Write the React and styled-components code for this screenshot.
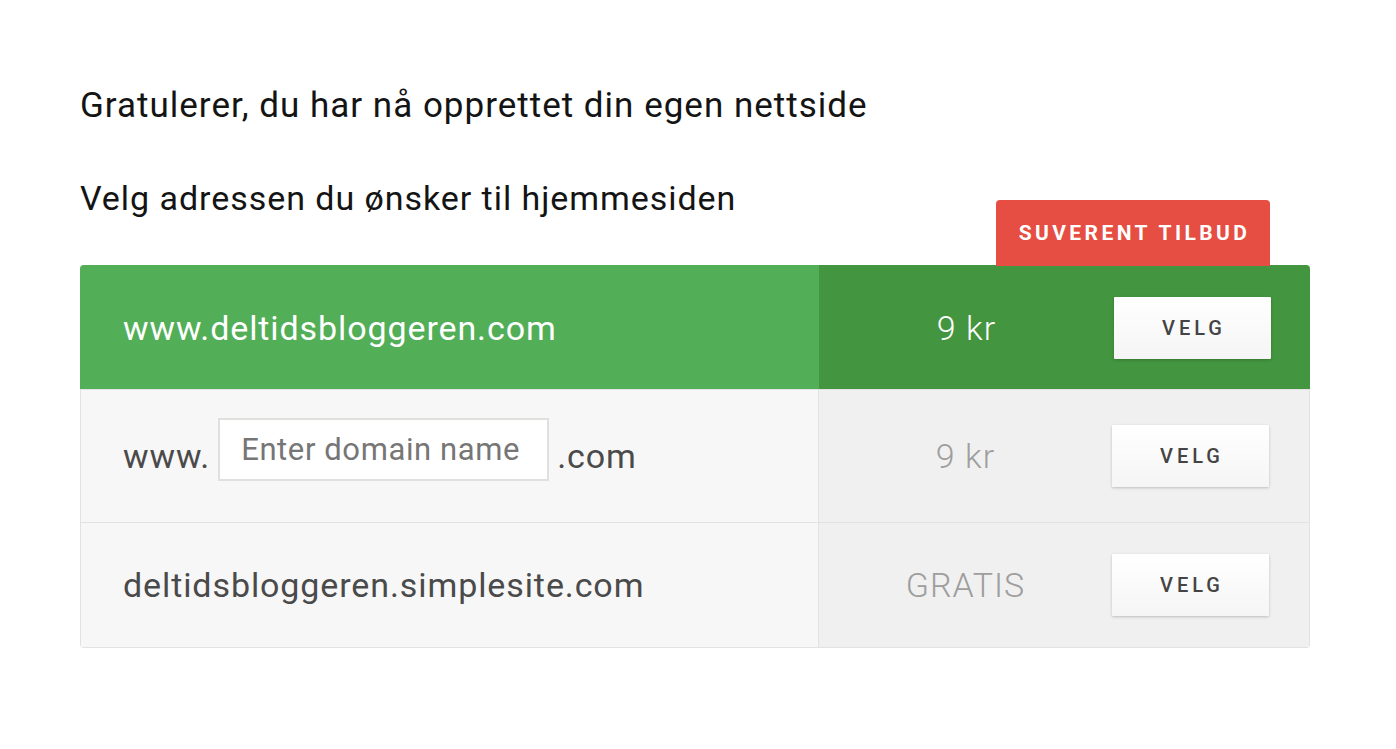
import React from 'react';
import styled, { createGlobalStyle } from 'styled-components';

const GlobalStyle = createGlobalStyle`
    body {
        margin: 0;
        background: #fff;
        font-family: Roboto, "Liberation Sans", sans-serif;
    }
`;

const Page = styled.div`
    padding: 86px 86px 0 80px;
`;

const Title = styled.h1`
    margin: 0;
    font-size: 35px;
    font-weight: 400;
    line-height: 40px;
    letter-spacing: 1px;
    color: #141414;
`;

const SubTitle = styled(Title)`
    margin-top: 52px;
    font-size: 34px;
    letter-spacing: 0.95px;
`;

const Table = styled.div`
    position: relative;
    box-sizing: border-box;
    margin-top: 47px;
    width: 1230px;
    display: grid;
    grid-template-columns: 738px 1fr;
    border: 1px solid #e2e2e2;
    border-top: none;
    border-radius: 4px;
`;

const Badge = styled.div`
    position: absolute;
    right: 39px;
    bottom: 100%;
    width: 274px;
    height: 66px;
    margin-bottom: -1px;
    padding-left: 3px;
    box-sizing: border-box;
    display: flex;
    align-items: center;
    justify-content: center;
    background: #e64d43;
    color: #fff;
    border-radius: 4px 4px 0 0;
    font-size: 21px;
    font-weight: 700;
    letter-spacing: 3.4px;
`;

const NameCell = styled.div`
    height: ${p => p.h}px;
    display: flex;
    align-items: center;
    padding-left: 42px;
    font-size: 34px;
    letter-spacing: 0.9px;
    color: ${p => (p.featured ? '#fff' : '#4a4a4a')};
    background: ${p => (p.featured ? '#52ae57' : '#f7f7f7')};
    border-right: 1px solid ${p => (p.featured ? '#52ae57' : '#e2e2e2')};
    border-top: 1px solid ${p => (p.featured ? '#52ae57' : '#e2e2e2')};
    ${p => p.featured && 'border-top-left-radius: 4px; margin-left: -1px; padding-left: 43px;'}
`;

const PriceCell = styled.div`
    height: ${p => p.h}px;
    display: flex;
    align-items: center;
    background: ${p => (p.featured ? '#43953f' : '#f0f0f0')};
    border-top: 1px solid ${p => (p.featured ? '#43953f' : '#e2e2e2')};
    ${p => p.featured && 'border-top-right-radius: 4px; margin-right: -1px; padding-right: 1px;'}
`;

const Price = styled.div`
    flex: 1;
    text-align: center;
    font-size: 34px;
    font-weight: 300;
    letter-spacing: 1px;
    color: ${p => (p.featured ? '#fff' : '#9e9e9e')};
`;

const Button = styled.button`
    width: 157px;
    height: 62px;
    margin-right: ${p => (p.featured ? 38 : 40)}px;
    padding: 0 0 0 3px;
    border: none;
    border-radius: 1px;
    background: linear-gradient(#ffffff, #f5f5f5);
    box-shadow: 0 1px 3px rgba(0, 0, 0, 0.22);
    font-family: Roboto, "Liberation Sans", sans-serif;
    font-size: 20px;
    font-weight: 500;
    letter-spacing: 4px;
    color: #444;
    cursor: pointer;
`;

const DomainInput = styled.input`
    width: 331px;
    height: 63px;
    box-sizing: border-box;
    margin: 0 8px 14px 8px;
    padding: 0 21px;
    border: 2px solid #e0e0dc;
    background: #fff;
    font-family: Roboto, "Liberation Sans", sans-serif;
    font-size: 31px;
    letter-spacing: 0.6px;
    color: #333;
    outline: none;

    &::placeholder {
        color: #767676;
    }
`;

const rows = [
    { key: 'own', h: 123, featured: true, price: '9 kr' },
    { key: 'custom', h: 132, price: '9 kr' },
    { key: 'free', h: 124, price: 'GRATIS' },
];

const renderName = (row) => {
    if (row.key === 'own') return 'www.deltidsbloggeren.com';
    if (row.key === 'custom') {
        return (
            <>
                www.
                <DomainInput placeholder="Enter domain name" />
                .com
            </>
        );
    }
    return 'deltidsbloggeren.simplesite.com';
};

const App = () => {
    return (
        <Page>
            <GlobalStyle />
            <Title>Gratulerer, du har nå opprettet din egen nettside</Title>
            <SubTitle>Velg adressen du ønsker til hjemmesiden</SubTitle>
            <Table>
                <Badge>SUVERENT TILBUD</Badge>
                {rows.map(row => (
                    <React.Fragment key={row.key}>
                        <NameCell h={row.h} featured={row.featured}>
                            {renderName(row)}
                        </NameCell>
                        <PriceCell h={row.h} featured={row.featured}>
                            <Price featured={row.featured}>{row.price}</Price>
                            <Button featured={row.featured}>VELG</Button>
                        </PriceCell>
                    </React.Fragment>
                ))}
            </Table>
        </Page>
    );
};

export default App;
